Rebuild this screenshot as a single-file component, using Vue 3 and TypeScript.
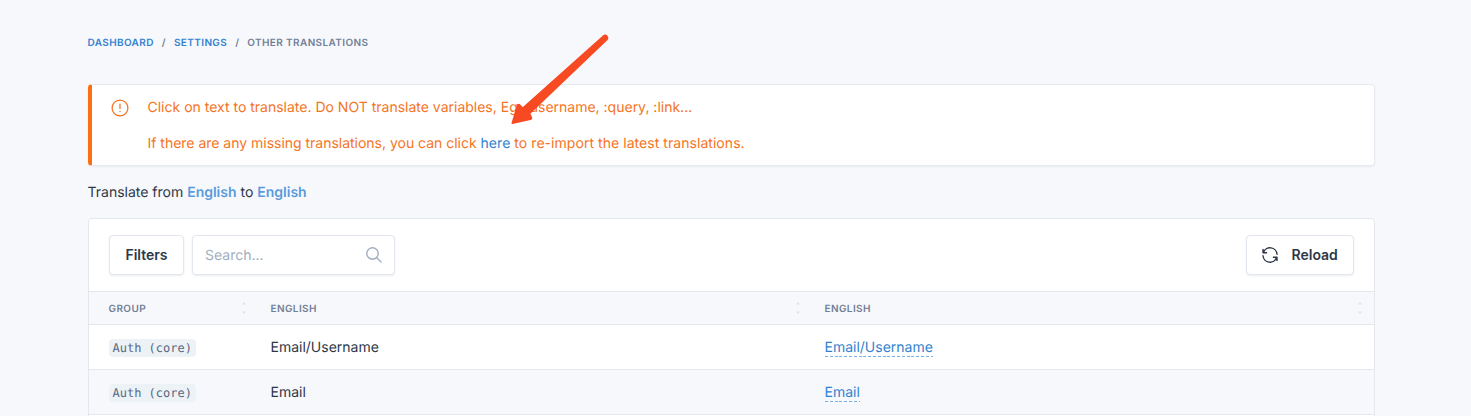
<script setup lang="ts">
interface TranslationRow {
  group: string
  source: string
  target: string
}

const columns: string[] = ['Group', 'English', 'English']
const rows: TranslationRow[] = [
  { group: 'Auth (core)', source: 'Email/Username', target: 'Email/Username' },
  { group: 'Auth (core)', source: 'Email', target: 'Email' },
]
</script>

<template>
  <main class="page">
    <nav class="breadcrumb">
      <a>Dashboard</a><span class="sep">/</span><a>Settings</a><span class="sep">/</span><span>Other translations</span>
    </nav>

    <section class="alert">
      <svg class="alert-icon" viewBox="0 0 18 18" fill="none" stroke="currentColor" stroke-width="1.3" stroke-linecap="round">
        <circle cx="9" cy="9" r="7.9" />
        <path d="M9 5.2v4.4M9 12.3v.1" />
      </svg>
      <div class="alert-text">
        <p>Click on text to translate. Do NOT translate variables, Eg. :username, :query, :link...</p>
        <p class="second"><span class="lead">If there are any missing translations, you can click </span><a>here</a> to re-import the latest translations.</p>
      </div>
      <svg class="arrow" viewBox="0 0 100 90" fill="#f74a22" stroke="#f74a22" stroke-width="1.4" stroke-linejoin="round">
        <path d="M93.4.9Q95.4-.5 97 1.3 98.4 3.2 96.8 4.8L19.6 78.6 21.6 83Q21.4 84 20.4 84.3L2.2 88.2 7.6 70Q8.4 68.9 9.4 69.8L12.8 72.9z" />
      </svg>
    </section>

    <p class="direction">Translate from <b>English</b> to <b>English</b></p>

    <section class="card">
      <div class="toolbar">
        <button class="btn filters">Filters</button>
        <div class="search">
          <span>Search...</span>
          <svg viewBox="0 0 16 16" fill="none" stroke="currentColor" stroke-width="1.4" stroke-linecap="round">
            <circle cx="6.5" cy="6.5" r="5.7" />
            <path d="m10.7 10.7 4.4 4.3" />
          </svg>
        </div>
        <button class="btn reload">
          <svg viewBox="0 0 16 16" fill="none" stroke="currentColor" stroke-width="1.4" stroke-linecap="round" stroke-linejoin="round">
            <path d="M1 2.4v3.3h3.6M1.4 5.5A7 7 0 0 1 15 7.3M15 13.6v-3.3h-3.6M14.6 10.5A7 7 0 0 1 1 8.7" />
          </svg>
          <span>Reload</span>
        </button>
      </div>
      <div class="row head">
        <div v-for="(column, i) in columns" :key="i" class="cell">
          <span>{{ column }}</span>
          <svg class="sort" viewBox="0 0 4 12" fill="currentColor">
            <path d="M0 2.6 2 0l2 2.6zM0 9.4 2 12l2-2.6z" />
          </svg>
        </div>
      </div>
      <div v-for="(row, i) in rows" :key="i" class="row body" :class="{ striped: i % 2 === 1 }">
        <div class="cell"><code>{{ row.group }}</code></div>
        <div class="cell"><span class="source">{{ row.source }}</span></div>
        <div class="cell"><a class="editable">{{ row.target }}</a></div>
      </div>
      <div class="row body"></div>
    </section>
  </main>
</template>

<style>
html,
body {
  height: 100%;
  margin: 0;
  overflow: hidden;
  background: #f7f8fc;
}
</style>

<style scoped>
.page {
  box-sizing: border-box;
  height: 416px;
  overflow: hidden;
  padding: 35px 96px 0 88px;
  color: #2d3748;
  font: 14px/18px Inter, sans-serif;
  text-rendering: geometricPrecision;
}
p {
  margin: 0;
}
.breadcrumb {
  height: 16px;
  margin-left: -0.5px;
  line-height: 16px;
  font-size: 10px;
  font-weight: 600;
  letter-spacing: 0.38px;
  text-transform: uppercase;
  color: #718096;
  white-space: nowrap;
}
.breadcrumb a {
  color: #3182ce;
}
.sep {
  margin: 0 8px;
}
.alert {
  position: relative;
  display: flex;
  box-sizing: border-box;
  height: 82px;
  margin-top: 33px;
  padding: 14px 0 0 18px;
  border: 1px solid #e7eaf0;
  border-left: 4px solid #fd6f12;
  border-radius: 4px;
  background: #fff;
  box-shadow: 0 1px 2px rgba(45, 55, 72, 0.06);
  color: #f57424;
}
.alert-icon {
  width: 18px;
  height: 18px;
  margin-left: 0.5px;
}
.alert-text {
  margin-left: 19px;
  white-space: nowrap;
}
.second {
  margin-top: 18px;
  letter-spacing: 0.05px;
}
.lead {
  letter-spacing: -0.015px;
}
.alert a {
  color: #3182ce;
}
.arrow {
  position: absolute;
  left: 418px;
  top: -50px;
  width: 100px;
  height: 90px;
  overflow: visible;
}
.direction {
  margin: 18px 0 0 -0.5px;
}
.direction b {
  font-weight: 600;
  color: #5a9bdc;
}
.card {
  box-sizing: border-box;
  margin-top: 16px;
  height: 260px;
  border: 1px solid #e4e8ee;
  border-radius: 4px;
  background: #fff;
}
.toolbar {
  display: flex;
  height: 72px;
  padding: 16px 20px 0;
  box-sizing: border-box;
}
.btn,
.search {
  box-sizing: border-box;
  height: 40px;
  border: 1px solid #e2e6ee;
  border-radius: 4px;
  background: #fff;
  box-shadow: 0 1px 2px rgba(45, 55, 72, 0.09);
  font: 14px/18px Inter, sans-serif;
  color: #2d3748;
}
.btn {
  padding: 0;
  font-weight: 600;
}
.filters {
  width: 75px;
}
.search {
  display: flex;
  align-items: center;
  justify-content: space-between;
  width: 203px;
  margin-left: 8px;
  padding: 0 12.5px 0 12px;
  color: #a0aec0;
}
.search span {
  padding-top: 2px;
}
.search svg,
.reload svg {
  width: 16px;
  height: 16px;
}
.reload {
  display: flex;
  align-items: center;
  width: 108px;
  margin-left: auto;
  padding-left: 14.5px;
}
.reload span {
  margin-left: 14px;
}
.row {
  display: grid;
  grid-template-columns: 162px 554px 1fr;
  box-sizing: border-box;
  height: 45px;
  padding-left: 19.5px;
  border-top: 1px solid #e4e8ee;
}
.cell {
  display: flex;
  align-items: center;
}
.head {
  height: 33px;
  background: #f7f8fc;
  color: #718096;
  font-size: 10px;
  font-weight: 600;
  letter-spacing: 0.4px;
  text-transform: uppercase;
}
.head .cell {
  justify-content: space-between;
}
.head span {
  padding-top: 1px;
}
.source {
  padding-top: 2px;
}
.sort {
  width: 4px;
  height: 12px;
  margin-right: 25px;
  color: #dde3eb;
}
.head .cell:last-child .sort {
  margin-right: 12px;
}
.striped {
  background: #f7f8fc;
}
code {
  height: 18px;
  margin-top: 2px;
  padding: 0 4px;
  border-radius: 4px;
  background: #edf2f7;
  color: #5b6880;
  font: 12px/18px "DejaVu Sans Mono", monospace;
}
.editable {
  height: 17px;
  margin-top: 2px;
  line-height: 17px;
  background: repeating-linear-gradient(90deg, #74afe8 0 3px, transparent 3px 4.8px) left bottom / 100% 1.5px no-repeat;
  padding-bottom: 1px;
  color: #3182ce;
}
</style>
